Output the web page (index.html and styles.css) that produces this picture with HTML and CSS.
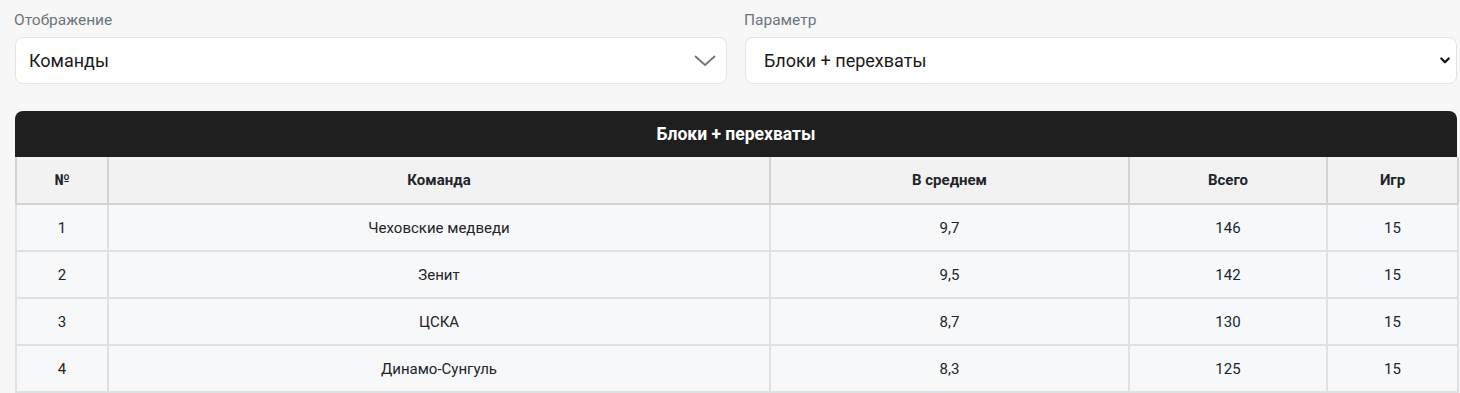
FILE: index.html
```html
<!DOCTYPE html>
<html lang="ru">
<head>
<meta charset="utf-8">
<title>Блоки + перехваты</title>
<link rel="stylesheet" href="styles.css">
</head>
<body>
<div class="page">
  <div class="filters">
    <div class="field">
      <div class="label">Отображение</div>
      <div class="select">
        <span>Команды</span>
        <svg class="chev-thin" width="22" height="12" viewBox="0 0 22 12"><path d="M1.5 1.5 L11 10 L20.5 1.5" fill="none" stroke="#707070" stroke-width="1.7" stroke-linecap="round" stroke-linejoin="round"/></svg>
      </div>
    </div>
    <div class="field">
      <div class="label">Параметр</div>
      <div class="select native">
        <span>Блоки + перехваты</span>
        <svg class="chev-bold" width="10" height="7" viewBox="0 0 10 7"><path d="M1.3 1.5 L5 5.2 L8.7 1.5" fill="none" stroke="#111" stroke-width="2.2" stroke-linecap="round" stroke-linejoin="round"/></svg>
      </div>
    </div>
  </div>

  <div class="card">
    <div class="card-title">Блоки + перехваты</div>
    <table class="stats">
      <colgroup>
        <col class="c1"><col class="c2"><col class="c3"><col class="c4"><col class="c5">
      </colgroup>
      <thead>
        <tr><th>№</th><th>Команда</th><th>В среднем</th><th>Всего</th><th>Игр</th></tr>
      </thead>
      <tbody>
        <tr><td>1</td><td>Чеховские медведи</td><td>9,7</td><td>146</td><td>15</td></tr>
        <tr><td>2</td><td>Зенит</td><td>9,5</td><td>142</td><td>15</td></tr>
        <tr><td>3</td><td>ЦСКА</td><td>8,7</td><td>130</td><td>15</td></tr>
        <tr><td>4</td><td>Динамо-Сунгуль</td><td>8,3</td><td>125</td><td>15</td></tr>
      </tbody>
    </table>
  </div>
</div>
</body>
</html>
```
FILE: styles.css
```css
* { box-sizing: border-box; }
html, body { margin: 0; padding: 0; }
body {
  background: #f7f7f7;
  font-family: Roboto, "Liberation Sans", Arial, sans-serif;
  color: #212529;
}
.page {
  padding: 10px 3px 0 15px;
}
.filters {
  display: grid;
  grid-template-columns: 1fr 1fr;
  column-gap: 18px;
}
.label {
  font-size: 15.5px;
  line-height: 21px;
  color: #6c757d;
  margin-left: -1px;
  margin-bottom: 6px;
}
.select {
  height: 47px;
  background: #fff;
  border: 1px solid #e4e4e4;
  border-radius: 8px;
  display: flex;
  align-items: center;
  justify-content: space-between;
  padding: 0 10px 0 13px;
  font-size: 18px;
  color: #1a1a1a;
}
.select.native { padding: 0 6px 0 18px; }
.card {
  margin-top: 27px;
}
.card-title {
  background: #1f1f1f;
  color: #fff;
  font-weight: 700;
  font-size: 17.5px;
  text-align: center;
  height: 46px;
  line-height: 46px;
  border-radius: 8px 8px 0 0;
}
.stats {
  width: 100%;
  border-collapse: collapse;
  table-layout: fixed;
  font-size: 15px;
}
.c1 { width: 92px; }
.c2 { width: 662px; }
.c3 { width: 359px; }
.c4 { width: 198px; }
.c5 { width: 131px; }
.stats th, .stats td {
  height: 47px;
  text-align: center;
  vertical-align: middle;
  padding: 0;
  border: 2px solid #dde2e6;
}
.stats th {
  background: #f2f2f2;
  font-weight: 700;
  border-color: #d3d3d3;
  border-top: 0;
}
.stats td {
  background: #f7f8f9;
  font-weight: 400;
}
```
